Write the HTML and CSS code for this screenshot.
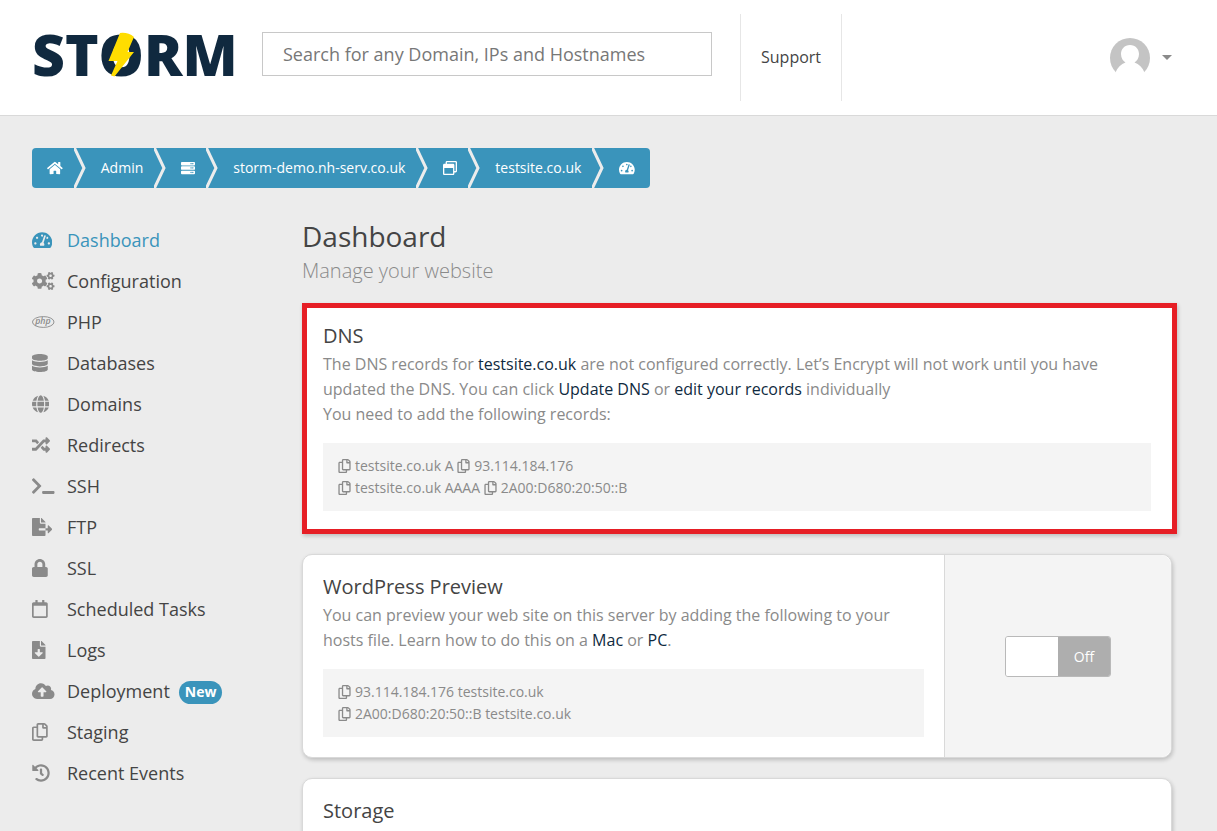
FILE: index.html
```html
<!DOCTYPE html>
<html lang="en">
<head>
  <meta charset="UTF-8" />
  <meta name="viewport" content="width=device-width, initial-scale=1.0"/>
  <title>Dashboard | testsite.co.uk | Storm</title>
  <link rel="stylesheet" href="styles.css">
</head>
<body>

<!-- Shared icon shapes -->
<svg class="sprite" aria-hidden="true">
  <defs>
    <path id="i-dash" d="M288 32C128.940 32 0 160.940 0 320c0 52.800 14.250 102.260 39.060 144.800 5.610 9.620 16.300 15.200 27.440 15.200h443c11.140 0 21.830-5.580 27.440-15.200C561.750 422.260 576 372.800 576 320c0-159.060-128.940-288-288-288zm0 64c14.710 0 26.580 10.130 30.320 23.650-1.110 2.260-2.640 4.230-3.450 6.670l-9.220 27.670c-5.130 3.490-10.970 6.010-17.640 6.010-17.670 0-32-14.330-32-32S270.330 96 288 96zM96 384c-17.670 0-32-14.330-32-32s14.330-32 32-32 32 14.330 32 32-14.330 32-32 32zm48-160c-17.670 0-32-14.330-32-32s14.330-32 32-32 32 14.330 32 32-14.330 32-32 32zm246.770-72.410l-61.330 184C343.130 347.330 352 364.540 352 384c0 11.720-3.380 22.550-8.880 32H232.880c-5.500-9.450-8.880-20.280-8.880-32 0-33.940 26.500-61.430 59.900-63.590l61.340-184.010c4.170-12.560 17.730-19.450 30.360-15.170 12.570 4.190 19.350 17.790 15.170 30.360zm14.660 57.200l15.520-46.550c3.470-1.290 7.130-2.230 11.050-2.230 17.670 0 32 14.330 32 32s-14.330 32-32 32c-11.380-.010-21.250-6.090-26.570-15.220zM480 384c-17.670 0-32-14.330-32-32s14.330-32 32-32 32 14.330 32 32-14.330 32-32 32z"/>
    <path id="i-copy" d="M433.941 65.941l-51.882-51.882A48 48 0 0 0 348.118 0H176c-26.510 0-48 21.490-48 48v48H48c-26.510 0-48 21.490-48 48v320c0 26.510 21.490 48 48 48h224c26.510 0 48-21.490 48-48v-48h80c26.510 0 48-21.490 48-48V99.882a48 48 0 0 0-14.059-33.941zM266 464H54a6 6 0 0 1-6-6V150a6 6 0 0 1 6-6h74v224c0 26.510 21.490 48 48 48h96v42a6 6 0 0 1-6 6zm128-96H182a6 6 0 0 1-6-6V54a6 6 0 0 1 6-6h106v88c0 13.255 10.745 24 24 24h88v202a6 6 0 0 1-6 6zm6-256h-64V48h9.632c1.591 0 3.117.632 4.243 1.757l48.368 48.368a6 6 0 0 1 1.757 4.243V112z"/>
    <path id="i-gear" d="M512.100 191l-8.200 14.300c-3 5.300-9.400 7.500-15.100 5.400-11.800-4.400-22.600-10.700-32.100-18.600-4.600-3.800-5.800-10.500-2.800-15.700l8.200-14.300c-6.900-8-12.300-17.300-15.900-27.400h-16.500c-6 0-11.200-4.300-12.200-10.300-2-12-2.100-24.600 0-37.100 1-6 6.200-10.400 12.200-10.400h16.500c3.600-10.100 9-19.400 15.900-27.400l-8.200-14.300c-3-5.200-1.900-11.900 2.800-15.700 9.500-7.900 20.400-14.200 32.100-18.600 5.700-2.100 12.100.1 15.100 5.400l8.200 14.300c10.500-1.900 21.200-1.900 31.700 0L552 6.300c3-5.300 9.400-7.500 15.100-5.400 11.800 4.400 22.600 10.700 32.100 18.600 4.600 3.800 5.800 10.500 2.800 15.700l-8.200 14.300c6.900 8 12.300 17.300 15.900 27.400h16.500c6 0 11.200 4.300 12.200 10.300 2 12 2.100 24.600 0 37.100-1 6-6.200 10.400-12.200 10.400h-16.500c-3.600 10.100-9 19.400-15.900 27.400l8.200 14.300c3 5.200 1.900 11.900-2.800 15.700-9.500 7.900-20.400 14.200-32.100 18.600-5.700 2.100-12.100-.1-15.100-5.400l-8.200-14.300c-10.400 1.900-21.200 1.900-31.700 0zm-10.500-58.800c38.500 29.600 82.400-14.300 52.800-52.800-38.500-29.700-82.400 14.300-52.800 52.800z"/>
  </defs>
</svg>

<header class="topbar">
  <a class="logo" href="#" aria-label="Storm">
    <span>STORM</span>
    <svg class="bolt" viewBox="0 0 26 45" aria-hidden="true"><path d="M12 1Q20 0 26 5L19.500 20H26L6.500 44.500L3 43.500L9.500 29H.5Z"/></svg>
  </a>
  <input class="search" type="text" aria-label="Search" placeholder="Search for any Domain, IPs and Hostnames">
  <a class="support" href="#">Support</a>
  <button class="account" type="button" aria-label="Account menu">
    <svg class="avatar" viewBox="0 0 40 40" aria-hidden="true">
      <circle cx="20" cy="20" r="20" fill="#c4c4c4"/>
      <path d="M20 7c5.500 0 9 4 9 9 0 4-2 7-4.500 8.500C29 26 32.500 29.500 34.500 34.500L34 40H6l-.500-5.500C7.500 29.500 11 26 15.500 24.500 13 23 11 20 11 16c0-5 3.500-9 9-9z" fill="#fff"/>
    </svg>
    <span class="caret"></span>
  </button>
</header>

<div class="page">

  <!-- Breadcrumb -->
  <nav class="crumbs" aria-label="Breadcrumb">
    <a href="#" aria-label="Home"><svg viewBox="0 0 576 512"><path d="M280.370 148.260L96 300.110V464a16 16 0 0 0 16 16l112.060-.290a16 16 0 0 0 15.920-16V368a16 16 0 0 1 16-16h64a16 16 0 0 1 16 16v95.640a16 16 0 0 0 16 16.050L464 480a16 16 0 0 0 16-16V300L295.670 148.260a12.190 12.190 0 0 0-15.300 0zM571.600 251.470L488 182.560V44.050a12 12 0 0 0-12-12h-56a12 12 0 0 0-12 12v72.610L318.470 43a48 48 0 0 0-61 0L4.340 251.470a12 12 0 0 0-1.600 16.900l25.500 31A12 12 0 0 0 45.150 301l235.220-193.740a12.190 12.190 0 0 1 15.300 0L530.900 301a12 12 0 0 0 16.900-1.600l25.500-31a12 12 0 0 0-1.700-16.930z"/></svg></a>
    <svg class="sep" viewBox="0 0 12 40"><path d="M0 -1L10 20L0 41"/></svg>
    <a href="#">Admin</a>
    <svg class="sep" viewBox="0 0 12 40"><path d="M0 -1L10 20L0 41"/></svg>
    <a href="#" aria-label="Servers"><svg viewBox="0 0 512 512"><path fill-rule="evenodd" d="M32 32h448a32 32 0 0 1 32 32v64a32 32 0 0 1-32 32H32a32 32 0 0 1-32-32V64a32 32 0 0 1 32-32zm400 40a24 24 0 1 0 .1 0zm-64 0a24 24 0 1 0 .1 0zM32 192h448a32 32 0 0 1 32 32v64a32 32 0 0 1-32 32H32a32 32 0 0 1-32-32v-64a32 32 0 0 1 32-32zm400 40a24 24 0 1 0 .1 0zm-64 0a24 24 0 1 0 .1 0zM32 352h448a32 32 0 0 1 32 32v64a32 32 0 0 1-32 32H32a32 32 0 0 1-32-32v-64a32 32 0 0 1 32-32zm400 40a24 24 0 1 0 .1 0zm-64 0a24 24 0 1 0 .1 0z"/></svg></a>
    <svg class="sep" viewBox="0 0 12 40"><path d="M0 -1L10 20L0 41"/></svg>
    <a href="#">storm-demo.nh-serv.co.uk</a>
    <svg class="sep" viewBox="0 0 12 40"><path d="M0 -1L10 20L0 41"/></svg>
    <a href="#" aria-label="Websites"><svg viewBox="0 0 512 512"><path d="M464 0H144c-26.500 0-48 21.500-48 48v48H48c-26.500 0-48 21.500-48 48v320c0 26.500 21.500 48 48 48h320c26.500 0 48-21.500 48-48v-48h48c26.500 0 48-21.500 48-48V48c0-26.500-21.500-48-48-48zm-96 464H48V256h320v208zm96-96h-48V144c0-26.500-21.500-48-48-48H144V48h320v320z"/></svg></a>
    <svg class="sep" viewBox="0 0 12 40"><path d="M0 -1L10 20L0 41"/></svg>
    <a href="#">testsite.co.uk</a>
    <svg class="sep" viewBox="0 0 12 40"><path d="M0 -1L10 20L0 41"/></svg>
    <a href="#" aria-label="Dashboard"><svg viewBox="0 0 576 512"><use href="#i-dash"/></svg></a>
  </nav>

  <div class="columns">

    <!-- Sidebar -->
    <nav class="sidebar" aria-label="Website">
      <a class="active" href="#"><span class="icon"><svg viewBox="0 0 576 512"><use href="#i-dash"/></svg></span>Dashboard</a>
      <a href="#"><span class="icon"><svg viewBox="0 0 640 512"><use href="#i-gear"/><use href="#i-gear" y="300"/><path d="M386.300 286.100l33.700 16.800c10.100 5.800 14.500 18.100 10.500 29.100-8.900 24.200-26.400 46.400-42.600 65.800-7.400 8.900-20.200 11.100-30.300 5.300l-29.100-16.800c-16 13.700-34.600 24.600-54.900 31.700v33.600c0 11.600-8.300 21.600-19.700 23.600-24.600 4.200-50.400 4.400-75.900 0-11.500-2-20-11.900-20-23.600V418c-20.300-7.200-38.900-18-54.900-31.700L74 403c-10 5.800-22.900 3.600-30.300-5.300-16.200-19.400-33.300-41.600-42.200-65.700-4-10.900.4-23.200 10.500-29.100l33.300-16.800c-3.900-20.900-3.900-42.400 0-63.400L12 205.800c-10.100-5.800-14.600-18.100-10.500-29 8.900-24.200 26-46.400 42.200-65.800 7.400-8.900 20.200-11.100 30.300-5.300l29.100 16.800c16-13.700 34.600-24.600 54.900-31.700V57.100c0-11.500 8.200-21.500 19.600-23.500 24.600-4.200 50.500-4.400 76-.1 11.500 2 20 11.900 20 23.600v33.600c20.300 7.200 38.900 18 54.900 31.700l29.100-16.800c10-5.800 22.900-3.600 30.300 5.300 16.200 19.400 33.200 41.600 42.100 65.800 4 10.900.1 23.200-10 29.100l-33.700 16.800c3.900 21 3.900 42.500 0 63.500zm-117.600 21.100c59.200-77-28.700-164.900-105.700-105.700-59.200 77 28.700 164.900 105.700 105.700z"/></svg></span>Configuration</a>
      <a href="#"><span class="icon"><svg viewBox="0 0 640 512"><ellipse class="php-ring" cx="320" cy="256" rx="306" ry="154"/><text class="php-text" x="310" y="318" text-anchor="middle">php</text></svg></span>PHP</a>
      <a href="#"><span class="icon"><svg viewBox="0 0 448 512"><path d="M448 73.143v45.714C448 159.143 347.667 192 224 192S0 159.143 0 118.857V73.143C0 32.857 100.333 0 224 0s224 32.857 224 73.143zM448 176v102.857C448 319.143 347.667 352 224 352S0 319.143 0 278.857V176c48.125 33.143 136.208 48.572 224 48.572S399.874 209.143 448 176zm0 160v102.857C448 479.143 347.667 512 224 512S0 479.143 0 438.857V336c48.125 33.143 136.208 48.572 224 48.572S399.874 369.143 448 336z"/></svg></span>Databases</a>
      <a href="#"><span class="icon"><svg viewBox="0 0 496 512"><path d="M336.500 160C322 70.700 287.800 8 248 8s-74 62.700-88.500 152h177zM152 256c0 22.200 1.200 43.500 3.300 64h185.300c2.100-20.500 3.300-41.800 3.300-64s-1.200-43.500-3.300-64H155.300c-2.100 20.500-3.300 41.800-3.300 64zm324.700-96c-28.600-67.900-86.500-120.400-158-141.600 24.400 33.800 41.200 84.700 50 141.600h108zM177.200 18.400C105.800 39.600 47.800 92.100 19.300 160h108c8.700-56.900 25.500-107.800 49.900-141.600zM487.400 192H372.700c2.100 21 3.300 42.500 3.300 64s-1.200 43-3.300 64h114.600c5.500-20.500 8.600-41.800 8.600-64s-3.100-43.500-8.500-64zM120 256c0-21.500 1.200-43 3.300-64H8.600C3.200 212.500 0 233.800 0 256s3.200 43.500 8.600 64h114.600c-2-21-3.200-42.500-3.200-64zm39.500 96c14.500 89.300 48.700 152 88.500 152s74-62.700 88.500-152h-177zm159.300 141.600c71.400-21.200 129.400-73.700 158-141.600h-108c-8.800 56.900-25.600 107.800-50 141.600zM19.300 352c28.600 67.900 86.500 120.400 158 141.600-24.400-33.800-41.200-84.700-50-141.600h-108z"/></svg></span>Domains</a>
      <a href="#"><span class="icon"><svg viewBox="0 0 512 512"><path d="M504.971 359.029c9.373 9.373 9.373 24.569 0 33.941l-80 79.984c-15.010 15.010-40.971 4.490-40.971-16.971V416h-58.785a12.004 12.004 0 0 1-8.773-3.812l-70.556-75.596 53.333-57.143L352 336h32v-39.981c0-21.438 25.943-31.998 40.971-16.971l80 79.981zM12 176h84l52.781 56.551 53.333-57.143-70.556-75.596A11.999 11.999 0 0 0 122.785 96H12c-6.627 0-12 5.373-12 12v56c0 6.627 5.373 12 12 12zm372 0v39.984c0 21.460 25.961 31.980 40.971 16.971l80-79.984c9.373-9.373 9.373-24.569 0-33.941l-80-79.981C409.943 24.021 384 34.582 384 56.019V96h-58.785a12.004 12.004 0 0 0-8.773 3.812L96 336H12c-6.627 0-12 5.373-12 12v56c0 6.627 5.373 12 12 12h110.785c3.326 0 6.503-1.381 8.773-3.812L352 176h32z"/></svg></span>Redirects</a>
      <a href="#"><span class="icon"><svg viewBox="0 0 640 512"><path d="M257.981 272.971L63.638 467.314c-9.373 9.373-24.569 9.373-33.941 0L7.029 444.647c-9.357-9.357-9.375-24.522-.040-33.901L161.011 256 6.990 101.255c-9.335-9.379-9.317-24.544.040-33.901l22.667-22.667c9.373-9.373 24.569-9.373 33.941 0L257.981 239.030c9.373 9.372 9.373 24.568 0 33.941zM640 456v-32c0-13.255-10.745-24-24-24H312c-13.255 0-24 10.745-24 24v32c0 13.255 10.745 24 24 24h304c13.255 0 24-10.745 24-24z"/></svg></span>SSH</a>
      <a href="#"><span class="icon"><svg viewBox="0 0 576 512"><path d="M384 121.900c0-6.300-2.500-12.400-7-16.900L279.100 7c-4.500-4.500-10.600-7-17-7H256v128h128zM571 308l-95.700-96.400c-10.100-10.100-27.400-3-27.400 11.300V288h-64v64h64v65.200c0 14.300 17.300 21.400 27.400 11.300L571 332c6.600-6.600 6.600-17.400 0-24zm-379 28v-32c0-8.800 7.200-16 16-16h176V160H248c-13.200 0-24-10.800-24-24V0H24C10.700 0 0 10.700 0 24v464c0 13.300 10.700 24 24 24h336c13.300 0 24-10.700 24-24V352H208c-8.800 0-16-7.200-16-16z"/></svg></span>FTP</a>
      <a href="#"><span class="icon"><svg viewBox="0 0 448 512"><path d="M400 224h-24v-72C376 68.200 307.800 0 224 0S72 68.200 72 152v72H48c-26.500 0-48 21.500-48 48v192c0 26.500 21.500 48 48 48h352c26.500 0 48-21.500 48-48V272c0-26.500-21.500-48-48-48zm-104 0H152v-72c0-39.700 32.300-72 72-72s72 32.300 72 72v72z"/></svg></span>SSL</a>
      <a href="#"><span class="icon"><svg viewBox="0 0 448 512"><path d="M400 64h-48V12c0-6.600-5.400-12-12-12h-40c-6.600 0-12 5.400-12 12v52H160V12c0-6.600-5.400-12-12-12h-40c-6.600 0-12 5.400-12 12v52H48C21.500 64 0 85.500 0 112v352c0 26.500 21.500 48 48 48h352c26.500 0 48-21.500 48-48V112c0-26.500-21.500-48-48-48zm-6 400H54c-3.300 0-6-2.700-6-6V160h352v298c0 3.300-2.700 6-6 6z"/></svg></span>Scheduled Tasks</a>
      <a href="#"><span class="icon"><svg viewBox="0 0 384 512"><path d="M224 136V0H24C10.700 0 0 10.700 0 24v464c0 13.300 10.700 24 24 24h336c13.300 0 24-10.700 24-24V160H248c-13.200 0-24-10.800-24-24zm76.450 211.360l-96.420 95.700c-6.650 6.610-17.390 6.610-24.040 0l-96.420-95.700C73.420 337.290 80.540 320 94.820 320H160v-80c0-8.840 7.160-16 16-16h32c8.840 0 16 7.160 16 16v80h65.180c14.280 0 21.400 17.290 11.270 27.360zM377 105L279.100 7c-4.500-4.500-10.600-7-17-7H256v128h128v-6.100c0-6.300-2.500-12.400-7-16.900z"/></svg></span>Logs</a>
      <a href="#"><span class="icon"><svg viewBox="0 0 640 512"><path d="M537.600 226.600c4.100-10.700 6.400-22.400 6.400-34.600 0-53-43-96-96-96-19.700 0-38.100 6-53.300 16.200C367 64.200 315.300 32 256 32c-88.400 0-160 71.600-160 160 0 2.700.1 5.400.2 8.100C40.200 219.800 0 273.200 0 336c0 79.500 64.500 144 144 144h368c70.700 0 128-57.300 128-128 0-61.900-44-113.600-102.400-125.400zM393.400 288H328v112c0 8.800-7.200 16-16 16h-48c-8.800 0-16-7.200-16-16V288h-65.400c-14.300 0-21.400-17.200-11.300-27.300l105.400-105.400c6.200-6.200 16.400-6.200 22.600 0l105.400 105.400c10.100 10.100 2.900 27.300-11.300 27.300z"/></svg></span>Deployment<span class="badge">New</span></a>
      <a href="#"><span class="icon"><svg viewBox="0 0 448 512"><use href="#i-copy"/></svg></span>Staging</a>
      <a href="#"><span class="icon"><svg viewBox="0 0 512 512"><path d="M504 255.531c.253 136.640-111.180 248.372-247.820 248.468-59.015.042-113.223-20.530-155.822-54.911-11.077-8.940-11.905-25.541-1.839-35.607l11.267-11.267c8.609-8.609 22.353-9.551 31.891-1.984C173.062 425.135 212.781 440 256 440c101.705 0 184-82.311 184-184 0-101.705-82.311-184-184-184-48.814 0-93.149 18.969-126.068 49.932l50.754 50.754c10.080 10.080 2.941 27.314-11.313 27.314H24c-8.837 0-16-7.163-16-16V38.627c0-14.254 17.234-21.393 27.314-11.314l49.372 49.372C129.209 34.136 189.552 8 256 8c136.810 0 247.747 110.780 248 247.531zm-180.912 78.784l9.823-12.630c8.138-10.463 6.253-25.542-4.210-33.679L288 256.349V152c0-13.255-10.745-24-24-24h-16c-13.255 0-24 10.745-24 24v135.651l65.409 50.874c10.463 8.137 25.541 6.253 33.679-4.210z"/></svg></span>Recent Events</a>
    </nav>

    <!-- Main content -->
    <main class="content">
      <h1>Dashboard</h1>
      <p class="subtitle">Manage your website</p>

      <section class="card alert">
        <h2>DNS</h2>
        <p>The DNS records for <a href="#">testsite.co.uk</a> are not configured correctly. Let’s Encrypt will not work until you have updated the DNS. You can click <a href="#">Update DNS</a> or <a href="#">edit your records</a> individually<br>You need to add the following records:</p>
        <div class="records">
          <div><button class="copy" type="button" aria-label="Copy name"><svg viewBox="0 0 448 512"><use href="#i-copy"/></svg></button>testsite.co.uk A <button class="copy" type="button" aria-label="Copy value"><svg viewBox="0 0 448 512"><use href="#i-copy"/></svg></button>93.114.184.176</div>
          <div><button class="copy" type="button" aria-label="Copy name"><svg viewBox="0 0 448 512"><use href="#i-copy"/></svg></button>testsite.co.uk AAAA <button class="copy" type="button" aria-label="Copy value"><svg viewBox="0 0 448 512"><use href="#i-copy"/></svg></button>2A00:D680:20:50::B</div>
        </div>
      </section>

      <section class="card split">
        <div class="card-body">
          <h2>WordPress Preview</h2>
          <p>You can preview your web site on this server by adding the following to your hosts file. Learn how to do this on a <a href="#">Mac</a> or <a href="#">PC</a>.</p>
          <div class="records">
            <div><button class="copy" type="button" aria-label="Copy line"><svg viewBox="0 0 448 512"><use href="#i-copy"/></svg></button>93.114.184.176 testsite.co.uk</div>
            <div><button class="copy" type="button" aria-label="Copy line"><svg viewBox="0 0 448 512"><use href="#i-copy"/></svg></button>2A00:D680:20:50::B testsite.co.uk</div>
          </div>
        </div>
        <div class="card-side">
          <label class="switch">
            <input type="checkbox" aria-label="WordPress Preview">
            <span class="knob"></span>
            <span class="state">Off</span>
          </label>
        </div>
      </section>

      <section class="card">
        <div class="card-body">
          <h2>Storage</h2>
        </div>
      </section>
    </main>
  </div>
</div>

</body>
</html>
```
FILE: styles.css
```css
* {
  box-sizing: border-box;
}
body {
  margin: 0;
  font-family: 'Open Sans', sans-serif;
  font-size: 16px;
  background: #ececec;
  color: #8a8a8a;
}
a {
  color: #0f2a40;
  text-decoration: none;
}
button {
  background: none;
  border: none;
  padding: 0;
  font: inherit;
  cursor: pointer;
}
svg {
  fill: currentColor;
}
.sprite {
  position: absolute;
  width: 0;
  height: 0;
}

/* Header */
.topbar {
  display: flex;
  align-items: center;
  height: 116px;
  padding: 0 45px 0 32px;
  background: #fff;
  border-bottom: 1px solid #d9d9d9;
}
.logo {
  position: relative;
  width: 200px;
  margin: 0 30px 8px 0;
  color: #10293f;
  font-size: 57px;
  font-weight: 800;
  line-height: 44px;
}
.bolt {
  position: absolute;
  left: 76px;
  top: 0;
  width: 26px;
  height: 45px;
  fill: #ffdd00;
}
.search {
  width: 450px;
  height: 44px;
  margin-bottom: 7px;
  padding: 0 20px;
  border: 1px solid #c8c8c8;
  background: #fff;
  color: #444;
  font: 18px 'Open Sans', sans-serif;
}
.search::placeholder {
  color: #777;
}
.support {
  height: 87px;
  margin-left: 28px;
  padding: 0 20px;
  border-left: 1px solid #e6e6e6;
  border-right: 1px solid #e6e6e6;
  color: #444;
  line-height: 87px;
}
.account {
  display: flex;
  align-items: center;
  gap: 12px;
  margin-left: auto;
}
.avatar {
  width: 40px;
  height: 40px;
}
.caret {
  border: 5px solid transparent;
  border-top-color: #8a8a8a;
  border-bottom: none;
}

/* Breadcrumb */
.page {
  padding: 32px 45px 0 32px;
}
.crumbs {
  display: inline-flex;
  height: 40px;
  background: #3a94bb;
  border-radius: 4px;
  overflow: hidden;
  vertical-align: top;
}
.crumbs a {
  display: flex;
  align-items: center;
  padding: 0 11px 1px 15px;
  color: #fff;
  font-size: 14px;
}
.crumbs a svg {
  height: 14px;
}
.crumbs a:last-child {
  padding-right: 15px;
}
.sep {
  width: 12px;
  height: 40px;
  fill: none;
  stroke: #ececec;
  stroke-width: 3;
}

/* Columns */
.columns {
  display: flex;
  margin-top: 31px;
}
.sidebar {
  flex: 0 0 270px;
}
.sidebar a {
  display: flex;
  align-items: center;
  height: 41px;
  color: #444;
  font-size: 18px;
}
.sidebar a.active, .sidebar a.active .icon {
  color: #3a94bb;
}
.icon {
  display: flex;
  width: 35px;
  color: #8a8a8a;
}
.icon svg {
  height: 18px;
}
.php-ring {
  fill: none;
  stroke: currentColor;
  stroke-width: 26;
}
.php-text {
  font: italic 600 250px 'Open Sans', sans-serif;
}
.badge {
  height: 23px;
  margin: 4px 0 0 9px;
  padding: 0 6px;
  border-radius: 12px;
  background: #3a94bb;
  color: #fff;
  font-size: 14px;
  font-weight: 700;
  line-height: 22px;
}

/* Content */
.content {
  flex: 1;
  min-width: 0;
}
h1 {
  margin: 0 0 3px;
  color: #444;
  font-size: 28px;
  font-weight: 400;
  line-height: 34px;
}
h2 {
  margin: 0 0 4px;
  color: #444;
  font-size: 20px;
  font-weight: 400;
  line-height: 24px;
}
.subtitle {
  margin: 0 0 17px;
  font-size: 20px;
  font-weight: 300;
  line-height: 30px;
}
.card {
  margin-bottom: 20px;
  background: #fff;
  border: 1px solid #d9d9d9;
  border-radius: 10px;
  box-shadow: 1px 2px 4px rgba(0,0,0,0.2);
}
.card p {
  margin: 0;
  line-height: 25px;
}
.card-body {
  flex: 1;
  padding: 20px;
}
.alert {
  margin-right: -5px;
  padding: 16px 21px 18px 16px;
  border: 5px solid #e61e25;
  border-radius: 0;
}
.split {
  display: flex;
}
.card-side {
  display: flex;
  flex: 0 0 227px;
  align-items: center;
  justify-content: center;
  background: #f4f4f4;
  border-left: 1px solid #d9d9d9;
  border-radius: 0 10px 10px 0;
}
.records {
  margin-top: 16px;
  padding: 12px 15px;
  background: #f4f4f4;
  font-size: 14px;
  line-height: 22px;
}
.copy {
  margin-right: 4px;
  color: inherit;
  vertical-align: -2px;
}
.copy svg {
  display: block;
  width: 13px;
  height: 14px;
}

/* On/off switch */
.switch {
  position: relative;
  display: flex;
  width: 106px;
  height: 41px;
  border: 1px solid #b9b9b9;
  border-radius: 3px;
  overflow: hidden;
  cursor: pointer;
}
.switch input {
  position: absolute;
  opacity: 0;
}
.knob, .state {
  flex: 1;
}
.knob {
  background: #fff;
}
.state {
  background: #aeaeae;
  color: #fff;
  font-size: 14px;
  line-height: 39px;
  text-align: center;
}
```
